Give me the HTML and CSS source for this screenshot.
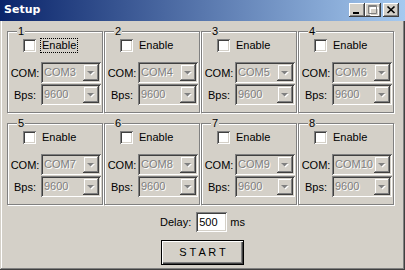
FILE: index.html
```html
<!DOCTYPE html>
<html lang="en">
<head>
    <meta charset="UTF-8">
    <title>Setup</title>
    <link rel="stylesheet" href="styles.css">
</head>
<body>
    <div class="window">
        <div class="titlebar">
            <span class="title">Setup</span>
            <div class="caption-buttons">
                <span class="cap-btn">
                    <svg width="16" height="14" viewBox="0 0 16 14"><rect x="4" y="9" width="6" height="2" fill="#000"/></svg>
                </span>
                <span class="cap-btn">
                    <svg width="16" height="14" viewBox="0 0 16 14">
                        <path d="M4.5 3.5h8v8h-8z M4 4.5h9" fill="none" stroke="#fff" stroke-width="1" transform="translate(1 1)"/>
                        <path d="M3.5 2.5h8v8h-8z M3 3.5h9" fill="none" stroke="#808080" stroke-width="1"/>
                    </svg>
                </span>
                <span class="cap-btn close">
                    <svg width="16" height="14" viewBox="0 0 16 14"><path d="M4.5 3.5l7 6.5M11.5 3.5l-7 6.5" stroke="#000" stroke-width="1.7"/></svg>
                </span>
            </div>
        </div>

        <div class="client">
            <div class="ports">
                <!-- one group box per serial port -->
                <div class="group">
                    <span class="group-title">1</span>
                    <div class="check-row"><span class="checkbox"></span><span class="check-label focused">Enable</span></div>
                    <div class="combo-row"><span class="combo-label">COM:</span><span class="combo"><span class="combo-text">COM3</span><span class="combo-arrow"><svg width="16" height="17"><polygon points="5,8 12,8 8.5,11.5" fill="#fff"/><polygon points="4,7 11,7 7.5,10.5" fill="#808080"/></svg></span></span></div>
                    <div class="combo-row"><span class="combo-label">Bps:</span><span class="combo"><span class="combo-text">9600</span><span class="combo-arrow"><svg width="16" height="17"><polygon points="5,8 12,8 8.5,11.5" fill="#fff"/><polygon points="4,7 11,7 7.5,10.5" fill="#808080"/></svg></span></span></div>
                </div>
                <div class="group">
                    <span class="group-title">2</span>
                    <div class="check-row"><span class="checkbox"></span><span class="check-label">Enable</span></div>
                    <div class="combo-row"><span class="combo-label">COM:</span><span class="combo"><span class="combo-text">COM4</span><span class="combo-arrow"><svg width="16" height="17"><polygon points="5,8 12,8 8.5,11.5" fill="#fff"/><polygon points="4,7 11,7 7.5,10.5" fill="#808080"/></svg></span></span></div>
                    <div class="combo-row"><span class="combo-label">Bps:</span><span class="combo"><span class="combo-text">9600</span><span class="combo-arrow"><svg width="16" height="17"><polygon points="5,8 12,8 8.5,11.5" fill="#fff"/><polygon points="4,7 11,7 7.5,10.5" fill="#808080"/></svg></span></span></div>
                </div>
                <div class="group">
                    <span class="group-title">3</span>
                    <div class="check-row"><span class="checkbox"></span><span class="check-label">Enable</span></div>
                    <div class="combo-row"><span class="combo-label">COM:</span><span class="combo"><span class="combo-text">COM5</span><span class="combo-arrow"><svg width="16" height="17"><polygon points="5,8 12,8 8.5,11.5" fill="#fff"/><polygon points="4,7 11,7 7.5,10.5" fill="#808080"/></svg></span></span></div>
                    <div class="combo-row"><span class="combo-label">Bps:</span><span class="combo"><span class="combo-text">9600</span><span class="combo-arrow"><svg width="16" height="17"><polygon points="5,8 12,8 8.5,11.5" fill="#fff"/><polygon points="4,7 11,7 7.5,10.5" fill="#808080"/></svg></span></span></div>
                </div>
                <div class="group">
                    <span class="group-title">4</span>
                    <div class="check-row"><span class="checkbox"></span><span class="check-label">Enable</span></div>
                    <div class="combo-row"><span class="combo-label">COM:</span><span class="combo"><span class="combo-text">COM6</span><span class="combo-arrow"><svg width="16" height="17"><polygon points="5,8 12,8 8.5,11.5" fill="#fff"/><polygon points="4,7 11,7 7.5,10.5" fill="#808080"/></svg></span></span></div>
                    <div class="combo-row"><span class="combo-label">Bps:</span><span class="combo"><span class="combo-text">9600</span><span class="combo-arrow"><svg width="16" height="17"><polygon points="5,8 12,8 8.5,11.5" fill="#fff"/><polygon points="4,7 11,7 7.5,10.5" fill="#808080"/></svg></span></span></div>
                </div>
                <div class="group">
                    <span class="group-title">5</span>
                    <div class="check-row"><span class="checkbox"></span><span class="check-label">Enable</span></div>
                    <div class="combo-row"><span class="combo-label">COM:</span><span class="combo"><span class="combo-text">COM7</span><span class="combo-arrow"><svg width="16" height="17"><polygon points="5,8 12,8 8.5,11.5" fill="#fff"/><polygon points="4,7 11,7 7.5,10.5" fill="#808080"/></svg></span></span></div>
                    <div class="combo-row"><span class="combo-label">Bps:</span><span class="combo"><span class="combo-text">9600</span><span class="combo-arrow"><svg width="16" height="17"><polygon points="5,8 12,8 8.5,11.5" fill="#fff"/><polygon points="4,7 11,7 7.5,10.5" fill="#808080"/></svg></span></span></div>
                </div>
                <div class="group">
                    <span class="group-title">6</span>
                    <div class="check-row"><span class="checkbox"></span><span class="check-label">Enable</span></div>
                    <div class="combo-row"><span class="combo-label">COM:</span><span class="combo"><span class="combo-text">COM8</span><span class="combo-arrow"><svg width="16" height="17"><polygon points="5,8 12,8 8.5,11.5" fill="#fff"/><polygon points="4,7 11,7 7.5,10.5" fill="#808080"/></svg></span></span></div>
                    <div class="combo-row"><span class="combo-label">Bps:</span><span class="combo"><span class="combo-text">9600</span><span class="combo-arrow"><svg width="16" height="17"><polygon points="5,8 12,8 8.5,11.5" fill="#fff"/><polygon points="4,7 11,7 7.5,10.5" fill="#808080"/></svg></span></span></div>
                </div>
                <div class="group">
                    <span class="group-title">7</span>
                    <div class="check-row"><span class="checkbox"></span><span class="check-label">Enable</span></div>
                    <div class="combo-row"><span class="combo-label">COM:</span><span class="combo"><span class="combo-text">COM9</span><span class="combo-arrow"><svg width="16" height="17"><polygon points="5,8 12,8 8.5,11.5" fill="#fff"/><polygon points="4,7 11,7 7.5,10.5" fill="#808080"/></svg></span></span></div>
                    <div class="combo-row"><span class="combo-label">Bps:</span><span class="combo"><span class="combo-text">9600</span><span class="combo-arrow"><svg width="16" height="17"><polygon points="5,8 12,8 8.5,11.5" fill="#fff"/><polygon points="4,7 11,7 7.5,10.5" fill="#808080"/></svg></span></span></div>
                </div>
                <div class="group">
                    <span class="group-title">8</span>
                    <div class="check-row"><span class="checkbox"></span><span class="check-label">Enable</span></div>
                    <div class="combo-row"><span class="combo-label">COM:</span><span class="combo"><span class="combo-text">COM10</span><span class="combo-arrow"><svg width="16" height="17"><polygon points="5,8 12,8 8.5,11.5" fill="#fff"/><polygon points="4,7 11,7 7.5,10.5" fill="#808080"/></svg></span></span></div>
                    <div class="combo-row"><span class="combo-label">Bps:</span><span class="combo"><span class="combo-text">9600</span><span class="combo-arrow"><svg width="16" height="17"><polygon points="5,8 12,8 8.5,11.5" fill="#fff"/><polygon points="4,7 11,7 7.5,10.5" fill="#808080"/></svg></span></span></div>
                </div>
            </div>

            <div class="delay-row">
                <span>Delay:</span>
                <span class="edit">500</span>
                <span>ms</span>
            </div>

            <div class="start-row">
                <span class="start-btn">S T A R T</span>
            </div>
        </div>
    </div>
</body>
</html>
```

FILE: styles.css
```css
/* Classic dialog look */
body {
    margin: 0;
    padding: 0;
    font-family: "Liberation Sans", Arial, sans-serif;
    font-size: 11px;
    color: #000;
    background-color: #d4d0c8;
}

.window {
    width: 405px;
    height: 270px;
    overflow: hidden;
    box-sizing: border-box;
    background-color: #d4d0c8;
    box-shadow: inset -1px -1px #404040, inset 1px 1px #d4d0c8, inset -2px -2px #808080, inset 2px 2px #fff;
}

/* Title bar */
.titlebar {
    height: 21px;
    box-sizing: border-box;
    padding: 3px 6px 0 4px;
    display: flex;
    justify-content: space-between;
    align-items: flex-start;
    background: linear-gradient(to right, #0a246a, #a6caf0);
}

.title {
    font-family: "DejaVu Sans", sans-serif;
    font-weight: bold;
    font-size: 11px;
    line-height: 14px;
    color: #fff;
}

.caption-buttons {
    display: flex;
}

.cap-btn {
    display: block;
    width: 16px;
    height: 14px;
    background-color: #d4d0c8;
    box-shadow: inset -1px -1px #404040, inset 1px 1px #fff, inset -2px -2px #808080;
}

.cap-btn svg {
    display: block;
}

.cap-btn.close {
    margin-left: 2px;
}

/* Client area */
.client {
    padding: 0 4px 4px;
}

.ports {
    display: grid;
    grid-template-columns: repeat(4, 96px);
    column-gap: 1px;
    row-gap: 10px;
    margin: 10px 0 0 3px;
}

.group {
    border: 1px solid #808080;
    box-shadow: inset 1px 1px #fff, 1px 1px #fff;
    padding: 0 0 7px 0;
}

.group-title {
    display: block;
    width: fit-content;
    height: 13px;
    line-height: 13px;
    margin: -7px 0 0 9px;
    padding: 0 1px;
    background-color: #d4d0c8;
}

.check-row {
    display: flex;
    align-items: center;
    height: 13px;
    margin-top: 1px;
    padding-left: 15px;
}

.checkbox {
    width: 13px;
    height: 13px;
    box-sizing: border-box;
    background-color: #fff;
    box-shadow: inset 1px 1px #808080, inset -1px -1px #fff, inset 2px 2px #404040, inset -2px -2px #d4d0c8;
}

.check-label {
    margin-left: 4px;
    padding: 0 1px;
    line-height: 13px;
    border: 1px dotted transparent;
}

.check-label.focused {
    border-color: #000;
}

.combo-row {
    display: flex;
    align-items: center;
    padding-left: 2px;
}

.check-row + .combo-row {
    margin-top: 10px;
}

.combo-row + .combo-row {
    margin-top: 1px;
}

.combo-label {
    width: 30px;
    text-align: center;
}

.combo {
    display: flex;
    width: 60px;
    height: 21px;
    box-sizing: border-box;
    margin-left: 1px;
    padding: 2px;
    background-color: #d4d0c8;
    box-shadow: inset 1px 1px #808080, inset -1px -1px #fff, inset 2px 2px #404040, inset -2px -2px #d4d0c8;
}

.combo-text {
    flex: 1;
    padding-left: 1px;
    line-height: 17px;
    color: #808080;
    text-shadow: 1px 1px #fff;
    overflow: hidden;
}

.combo-arrow {
    width: 16px;
    height: 17px;
    box-shadow: inset -1px -1px #404040, inset 1px 1px #d4d0c8, inset -2px -2px #808080, inset 2px 2px #fff;
}

.combo-arrow svg {
    display: block;
}

/* Delay + start */
.delay-row {
    display: flex;
    justify-content: center;
    align-items: center;
    height: 20px;
    margin-top: 7px;
}

.edit {
    width: 31px;
    height: 20px;
    box-sizing: border-box;
    margin: 0 3px 0 5px;
    padding: 2px 3px;
    line-height: 16px;
    background-color: #fff;
    box-shadow: inset 1px 1px #808080, inset -1px -1px #fff, inset 2px 2px #404040, inset -2px -2px #d4d0c8;
}

.start-row {
    display: flex;
    justify-content: center;
    margin-top: 8px;
}

.start-btn {
    width: 83px;
    height: 25px;
    box-sizing: border-box;
    border: 1px solid #000;
    text-align: center;
    line-height: 23px;
    background-color: #d4d0c8;
    box-shadow: inset 1px 1px #fff, inset -1px -1px #404040, inset -2px -2px #808080;
}
```
